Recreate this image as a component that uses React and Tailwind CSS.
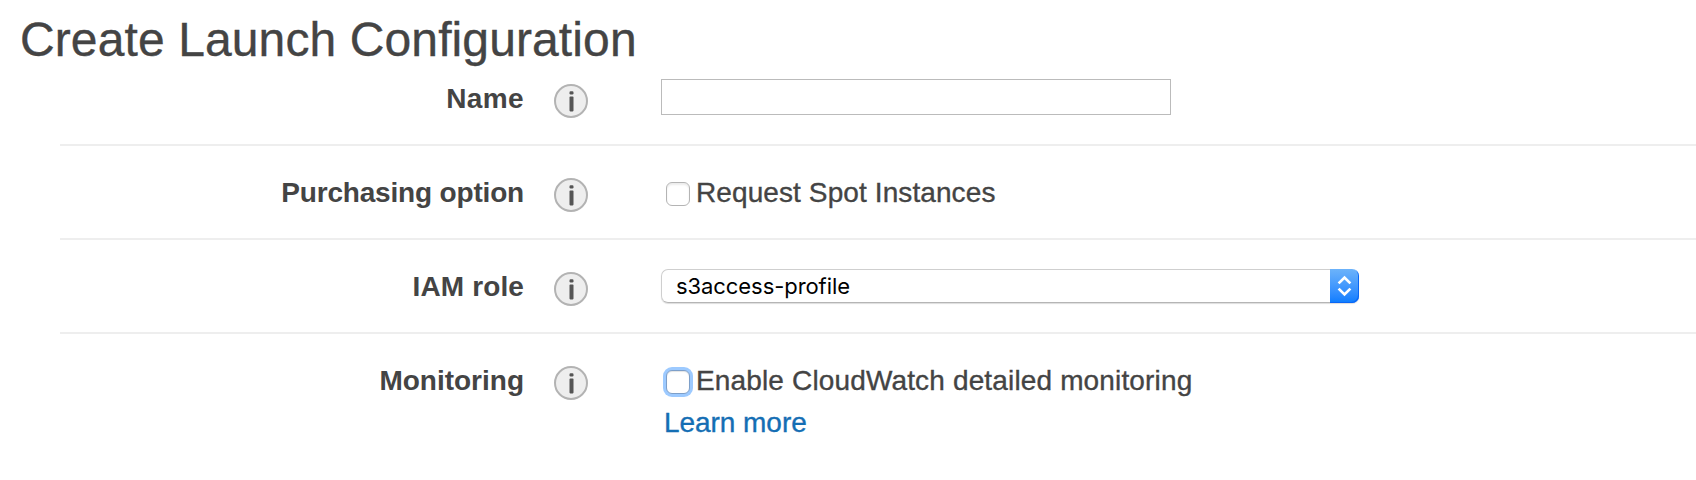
import React from "react";

function InfoIcon() {
  return (
    <svg viewBox="0 0 36 36" className="mt-[31px] ml-[29px] h-9 w-9 shrink-0">
      <circle cx="18" cy="18" r="16" fill="#eeeeee" stroke="#b3b3b3" strokeWidth="2" />
      <rect x="16.5" y="8.2" width="4" height="3.2" rx="1.2" fill="#555555" />
      <rect x="16.5" y="13.6" width="4" height="14.8" rx="0.8" fill="#555555" />
    </svg>
  );
}

function Row({ label, labelClass = "", last, children }) {
  return (
    <div className={`ml-[60px] flex h-[94px] items-start ${last ? "" : "border-b-2 border-[#eeeeee]"}`}>
      <div className="w-[464px] shrink-0 pt-[31px] text-right text-[28px] leading-[32px] font-bold whitespace-nowrap">
        <span className={labelClass}>{label}</span>
      </div>
      <InfoIcon />
      <div className="ml-[72px] flex flex-col items-start">{children}</div>
    </div>
  );
}

function Check({ label, focused }) {
  return (
    <label className="flex pt-[31px] pl-[5px] text-[28px] leading-[32px] whitespace-nowrap">
      <span
        className={`mt-[5px] mr-[6px] h-6 w-6 shrink-0 rounded-[6px] border bg-white ${
          focused
            ? "border-[#7d9fc9] shadow-[0_0_0_3px_#9dcaff,inset_0_1px_1px_#e4e4e4]"
            : "border-[#b4b4b4] shadow-[inset_0_2px_2px_#ececec]"
        }`}
      />
      <span className={`[-webkit-text-stroke:0.35px_#444444] ${focused ? "tracking-[0.15px]" : "tracking-[0.1px]"}`}>
        {label}
      </span>
    </label>
  );
}

export default function App() {
  return (
    <div className="h-[480px] w-full overflow-hidden bg-white font-['Liberation_Sans',Arial,sans-serif] text-[#444444]">
      <h1 className="h-[52px] pl-[20px] text-[48px] leading-[80px] tracking-[0.11px] whitespace-nowrap [-webkit-text-stroke:0.35px_#444444]">
        Create Launch Configuration
      </h1>
      <Row label="Name" labelClass="tracking-[0.4px]">
        <input type="text" aria-label="Name" className="mt-[27px] h-9 w-[510px] border border-[#bbbbbb] bg-white px-2 text-2xl outline-none" />
      </Row>
      <Row label="Purchasing option" labelClass="tracking-[-0.18px]">
        <Check label="Request Spot Instances" />
      </Row>
      <Row label="IAM role" labelClass="tracking-[0.12px]">
        <div className="mt-[29px] flex h-[34px] w-[698px] rounded-[7px] shadow-[0_1px_1px_#dddddd]">
          <div className="flex-1 rounded-l-[7px] border border-r-0 border-[#cfcfcf] border-b-[#b5b5b5] bg-white pl-[14px] font-['Inter',sans-serif] text-[22px] leading-[32px] tracking-[-0.07px] text-black">
            <span>s3access-profile</span>
          </div>
          <div className="flex w-[29px] items-center justify-center rounded-r-[7px] bg-linear-to-b from-[#6cb3fa] to-[#067cff] shadow-[inset_-1px_-1px_0_#0a66f5]">
            <svg viewBox="0 0 29 34" className="h-[34px] w-[29px] shrink-0" fill="none" stroke="white" strokeWidth="2.7">
              <path d="M8.6 14.4 14.5 8.6 20.4 14.4M8.6 19.6 14.5 25.4 20.4 19.6" />
            </svg>
          </div>
        </div>
      </Row>
      <Row label="Monitoring" last>
        <Check label="Enable CloudWatch detailed monitoring" focused />
        <a href="#" className="mt-[10px] pl-[3px] text-[28px] leading-[32px] tracking-[-0.05px] whitespace-nowrap text-[#146eb4] [-webkit-text-stroke:0.35px_#146eb4]">
          Learn more
        </a>
      </Row>
    </div>
  );
}
